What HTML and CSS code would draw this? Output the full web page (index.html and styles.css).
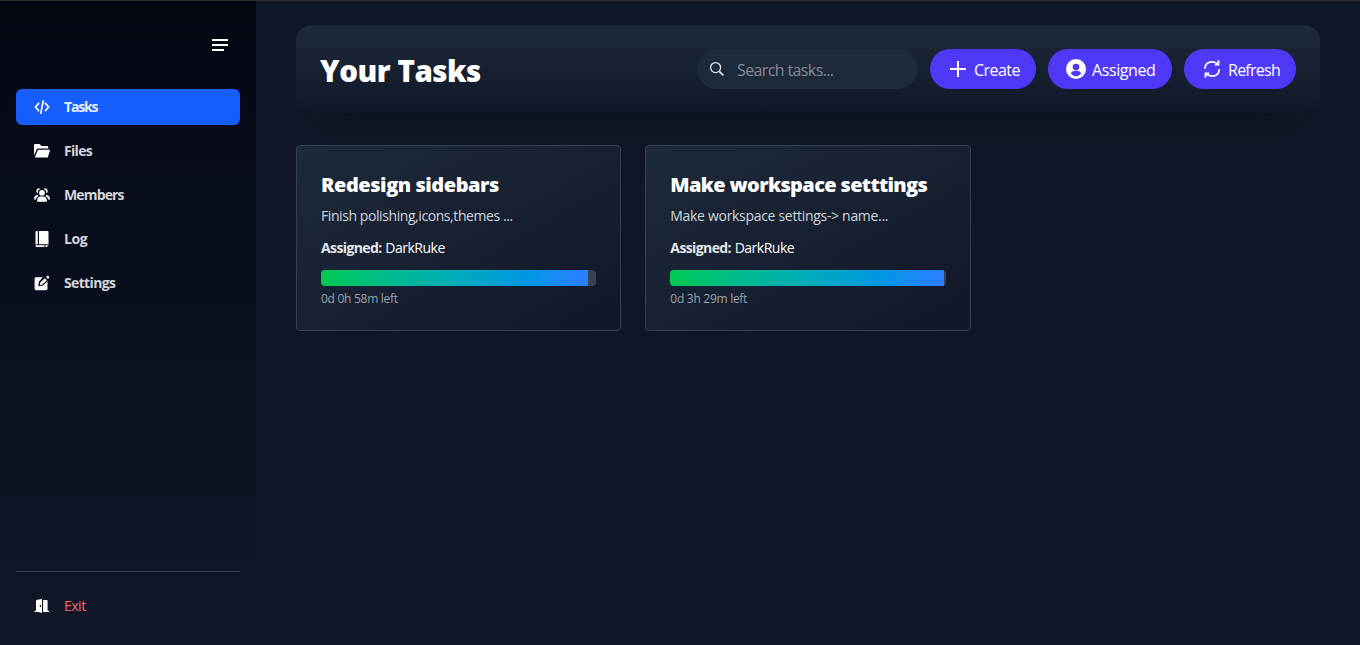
FILE: index.html
```html
<!DOCTYPE html>
<html lang="en">
<head>
<meta charset="utf-8">
<title>Your Tasks</title>
<link rel="stylesheet" href="styles.css">
</head>
<body>
<div class="app">
  <aside class="sidebar">
    <button class="toggle" aria-label="Toggle sidebar">
      <svg width="16" height="12" viewBox="0 0 16 12" fill="currentColor"><path d="M0 0h16v2H0zM0 5h16v2H0zM0 10h12v2H0z"/></svg>
    </button>
    <nav class="nav">
      <a class="item active">
        <svg class="icon" viewBox="0 0 16 16" fill="none" stroke="currentColor" stroke-width="1.7"><path d="M5 3.900 1.500 8l3.500 4.100M11 3.900l3.500 4.100-3.500 4.100M9.300 1.200 6.700 14.800"/></svg>
        <span class="t-tasks">Tasks</span>
      </a>
      <a class="item">
        <svg class="icon" viewBox="0 0 16 16" fill="currentColor"><path d="M0 12.500V2.200C0 1.500.500 1.100 1.200 1.100h4.300l2 1.900h5.600c.7 0 1.200.5 1.200 1.200v1.300H4.200c-.8 0-1.300.4-1.600 1.100z"/><path d="M4.900 6.700H15.400c.5 0 .8.400.6.900l-2 6.100c-.2.600-.6.900-1.200.9H1.700c-.5 0-.8-.4-.6-.9L3.700 7.600c.2-.6.600-.9 1.200-.9z"/></svg>
        <span class="t-files">Files</span>
      </a>
      <a class="item">
        <svg class="icon" viewBox="0 0 16 16" fill="currentColor"><circle cx="8" cy="5.800" r="2.900"/><path d="M3.200 14.800v-1.600c0-2.200 1.500-3.700 3.300-3.700h3c1.800 0 3.300 1.500 3.300 3.700v1.600z"/><path d="M4.800 1.300A2.900 2.900 0 0 0 3.700 6.700 4.400 4.400 0 0 1 6.300 2 2.900 2.900 0 0 0 4.800 1.300zM11.200 1.300a2.900 2.900 0 0 1 1.100 5.400A4.400 4.400 0 0 0 9.700 2a2.900 2.900 0 0 1 1.500-.7zM3.800 7.900C1.600 7.900.1 9.400.1 11.800v.8h1.800c.1-1.700 1-3 2.700-3.700zM12.200 7.900c2.200 0 3.700 1.500 3.700 3.900v.8h-1.800c-.1-1.700-1-3-2.700-3.700z"/></svg>
        <span class="t-members">Members</span>
      </a>
      <a class="item">
        <svg class="icon" viewBox="0 0 16 16" fill="currentColor" fill-rule="evenodd"><path d="M3 0h.8v13.200H2.700c-.6 0-.9.300-1.200.700V1.700C1.500.700 2.100 0 3 0zM5 0h8.300c.7 0 1.200.500 1.200 1.200V13.200H5zM2.700 14.200h7.700v1.800H3c-.9 0-1.500-.5-1.500-1.100 0-.4.500-.7 1.200-.7zM11.400 14.200h3v.9h-1.200v.9h-1.800z"/></svg>
        <span class="t-log">Log</span>
      </a>
      <a class="item">
        <svg class="icon" viewBox="0 0 16 16" fill="currentColor"><path d="M2.200 2.300h6.700L5 6.500 4.300 11.300 9.100 10.500 13.500 6.300v7.300c0 .9-.7 1.600-1.600 1.600H2.200c-.9 0-1.600-.7-1.600-1.600V3.900c0-.9.700-1.600 1.600-1.600z"/><path d="M10.900 3.200 12.900 5.200 8.400 9.500 5.900 9.900 6.300 7.500zM12.100 2l1.200-1.200c.8-.6 2.400.8 1.800 1.900L14 4z"/></svg>
        <span class="t-settings">Settings</span>
      </a>
    </nav>
    <div class="foot">
      <a class="item exit">
        <svg class="icon" viewBox="0 0 16 16" fill="currentColor" fill-rule="evenodd"><path d="M8 1v14l-3.500-1H.500v-1.300H2V3.300c0-.9.500-1.500 1.300-1.600zM5.800 7v1.900h1.200V7zM9.100 2h3.400c.7 0 1.100.4 1.100 1.100v9.600H15V14H9.100z"/></svg>
        <span class="t-exit">Exit</span>
      </a>
    </div>
  </aside>
  <main class="main">
    <header class="header">
      <h1 class="title">Your Tasks</h1>
      <div class="actions">
        <label class="search">
          <svg width="16" height="16" viewBox="0 0 16 16" fill="none" stroke="currentColor" stroke-width="1.300"><circle cx="6.600" cy="6.600" r="5"/><path d="m10.300 10.300 4 4" stroke-width="1.700"/></svg>
          <span class="t-search">Search tasks...</span>
        </label>
        <button class="btn create">
          <svg width="20" height="20" viewBox="0 0 20 20" fill="none" stroke="currentColor" stroke-width="2"><path d="M10 2v16M2 10h16"/></svg>
          <span class="t-create">Create</span>
        </button>
        <button class="btn assigned">
          <svg width="20" height="20" viewBox="0 0 20 20" fill="currentColor" fill-rule="evenodd"><path d="M10 0a10 10 0 1 0 0 20 10 10 0 0 0 0-20zm0 4.700a3.300 3.300 0 1 1 0 6.600 3.300 3.300 0 0 1 0-6.600zM5 14.800c0-1.900 1.900-3 5-3s5 1.100 5 3c-1.200 1.500-3 2.500-5 2.500s-3.800-1-5-2.500z"/></svg>
          <span class="t-assigned">Assigned</span>
        </button>
        <button class="btn refresh">
          <svg width="20" height="20" viewBox="0 0 20 20" fill="none" stroke="currentColor" stroke-width="1.800"><path d="M2.800 9.800C3.100 5.500 6 2.900 10 2.900c2.800 0 4.800 1 6.400 2.700M17.200 10.200c-.3 4.300-3.200 6.900-7.200 6.900-2.800 0-4.800-1-6.400-2.700"/><path d="M12.800 5.700h3.700V1.200M7.200 14.300H3.500v4.500"/></svg>
          <span class="t-refresh">Refresh</span>
        </button>
      </div>
    </header>
    <section class="grid">
      <article class="card">
        <h2 class="name t-name1">Redesign sidebars</h2>
        <p class="desc t-desc1">Finish polishing,icons,themes ...</p>
        <p class="who"><b>Assigned:</b> <span>DarkRuke</span></p>
        <div class="bar"><div class="fill" style="width:97%"></div></div>
        <p class="left">0d 0h 58m left</p>
      </article>
      <article class="card">
        <h2 class="name t-name2">Make workspace setttings</h2>
        <p class="desc t-desc2">Make workspace settings-&gt; name...</p>
        <p class="who"><b>Assigned:</b> <span>DarkRuke</span></p>
        <div class="bar"><div class="fill" style="width:99.500%"></div></div>
        <p class="left">0d 3h 29m left</p>
      </article>
    </section>
  </main>
</div>
</body>
</html>
```
FILE: styles.css
```css
* { box-sizing: border-box; margin: 0; padding: 0; }
body {
  height: 645px;
  overflow: hidden;
  background: #101828;
  color: #fff;
  font-family: "Open Sans", "Noto Sans", sans-serif;
  font-size: 16px;
  line-height: 24px;
}
button { border: 0; background: none; color: inherit; font: inherit; }
svg { display: block; flex: none; }
span, b, h1, h2, p { white-space: nowrap; }
.app { display: flex; height: 645px; border-top: 1px solid #2b2b2b; }

.sidebar {
  display: flex;
  flex-direction: column;
  width: 256px;
  padding: 24px 16px 21px;
  background: linear-gradient(to bottom, #030712, #101828);
}
.toggle { align-self: flex-end; padding: 14px 12px; margin-bottom: 24px; }
.nav { display: flex; flex-direction: column; gap: 8px; }
.item {
  display: flex;
  align-items: center;
  gap: 14px;
  height: 36px;
  padding-left: 18px;
  border-radius: 6px;
  color: #fff;
  font-size: 14px;
  line-height: 20px;
  font-weight: 700;
}
.item span { color: #d1d5dc; }
.item.active { background: #155dfc; }
.item.active span { color: #e8edfb; }
.icon { width: 16px; height: 16px; }
.foot { margin-top: auto; padding-top: 16px; border-top: 1px solid #364153; }
.item.exit { font-weight: 400; }
.item.exit span { color: #fb6468; }
.t-tasks { letter-spacing: -1.15px; }
.t-files { letter-spacing: -.7px; }
.t-members { letter-spacing: -.85px; }
.t-log { letter-spacing: -.4px; }
.t-settings { letter-spacing: -.65px; }
.t-exit { letter-spacing: -.5px; }

.main { flex: 1; padding: 24px 40px; }
.header {
  display: flex;
  align-items: center;
  justify-content: space-between;
  height: 88px;
  padding: 24px;
  margin-bottom: 32px;
  border-radius: 16px;
  background: linear-gradient(to bottom, #1e2939, #101828);
  box-shadow: 0 25px 50px -12px rgba(0, 0, 0, .25);
}
.title {
  padding-top: 3px;
  font-size: 29.500px;
  line-height: 36px;
  font-weight: 800;
  letter-spacing: -.45px;
}
.actions { display: flex; gap: 12px; }
.actions span { padding-top: 1px; }
.search {
  display: flex;
  align-items: center;
  gap: 12px;
  width: 221px;
  height: 40px;
  padding-left: 12px;
  border-radius: 20px;
  background: #1e2939;
  color: #e5e7eb;
}
.search span { color: #858b95; }
.btn {
  display: flex;
  align-items: center;
  gap: 6px;
  height: 40px;
  padding-left: 18px;
  border-radius: 20px;
  background: #4f39f6;
}
.create { width: 106px; }
.assigned { width: 124px; }
.refresh { width: 112px; }
.t-search { letter-spacing: -.62px; }
.t-create { letter-spacing: -.55px; }
.t-assigned { letter-spacing: -.4px; }
.t-refresh { letter-spacing: -.75px; }

.grid { display: grid; grid-template-columns: repeat(3, 1fr); gap: 24px; }
.card {
  min-width: 0;
  height: 186px;
  padding: 24px;
  border: 1px solid #364153;
  border-radius: 4px;
  background: linear-gradient(to bottom right, #1e2939, #101828);
  box-shadow: 0 4px 6px -1px rgba(0, 0, 0, .1);
}
.name { padding-top: 1px; margin-bottom: 7px; font-size: 20px; line-height: 28px; font-weight: 800; }
.desc { margin-bottom: 12px; color: #d1d5dc; font-size: 14px; line-height: 20px; }
.t-name1 { letter-spacing: -.47px; }
.t-name2 { letter-spacing: -.66px; }
.t-desc1 { letter-spacing: -.42px; }
.t-desc2 { letter-spacing: -.31px; }
.who { margin-bottom: 12px; font-size: 14px; line-height: 20px; }
.who b { color: #e5e7eb; font-weight: 700; letter-spacing: -.6px; }
.who span { letter-spacing: -.5px; }
.bar { height: 16px; margin-bottom: 4px; border-radius: 4px; background: #364153; overflow: hidden; }
.fill {
  height: 16px;
  background: linear-gradient(to right in oklab, oklch(72.3% .219 149.579), oklch(62.3% .214 259.815));
}
.left { padding-top: 1px; color: #99a1af; font-size: 12px; line-height: 16px; letter-spacing: -.28px; }
```
